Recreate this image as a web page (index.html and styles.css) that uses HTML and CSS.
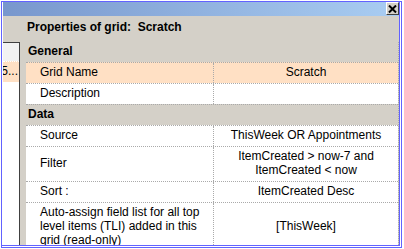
FILE: index.html
```html
<!DOCTYPE html>
<html>
<head>
<meta charset="utf-8">
<link rel="stylesheet" href="styles.css">
</head>
<body>
<div class="frame">
  <div class="inner">
    <div class="win">
      <div class="titlebar">
        <button class="close" type="button" aria-label="Close">
          <svg width="9" height="8" viewBox="0 0 9 8"><path d="M1 0.5 L8 7.5 M8 0.5 L1 7.5" stroke="#000" stroke-width="2" fill="none"/></svg>
        </button>
      </div>
      <div class="heading">Properties of grid:&nbsp; Scratch</div>
      <div class="main">
        <div class="side">
          <div class="side-head"></div>
          <div class="side-row"><span>5...</span></div>
        </div>
        <div class="props">
          <div class="section">General</div>
          <div class="row selected"><div class="label">Grid Name</div><div class="value">Scratch</div></div>
          <div class="row"><div class="label">Description</div><div class="value"></div></div>
          <div class="section">Data</div>
          <div class="row"><div class="label">Source</div><div class="value">ThisWeek OR Appointments</div></div>
          <div class="row"><div class="label">Filter</div><div class="value">ItemCreated &gt; now-7 and ItemCreated &lt; now</div></div>
          <div class="row"><div class="label">Sort :</div><div class="value">ItemCreated Desc</div></div>
          <div class="row"><div class="label">Auto-assign field list for all top level items (TLI) added in this grid (read-only)</div><div class="value">[ThisWeek]</div></div>
        </div>
      </div>
    </div>
  </div>
</div>
</body>
</html>
```
FILE: styles.css
```css
* { box-sizing: border-box; }
body {
  margin: 0;
  background: #fff;
  font-family: "Liberation Sans", Arial, sans-serif;
  font-size: 12px;
  color: #000;
}
.frame {
  margin: 1px 0 0 1px;
  width: 401px;
  height: 247px;
  border: 1px solid #6262ff;
  padding: 0 1px 1px 0;
  background: #fff;
}
.inner {
  height: 100%;
  border-right: 1px solid #6262ff;
  border-bottom: 1px solid #6262ff;
  padding-left: 1px;
}
.win {
  height: 100%;
  background: #d4d0c8;
  display: flex;
  flex-direction: column;
  overflow: hidden;
}
.titlebar {
  flex: none;
  height: 14px;
  background: linear-gradient(to right, #7897cd, #a9cdf2);
  display: flex;
  justify-content: flex-end;
}
.close {
  width: 13px;
  height: 13px;
  padding: 0;
  margin: 0;
  background: #d4d0c8;
  border: 1px solid;
  border-color: #fff #404040 #404040 #fff;
  display: flex;
  align-items: center;
  justify-content: center;
}
.close svg { display: block; }
.heading {
  flex: none;
  padding: 4px 0 8px 24px;
  line-height: 14px;
  font-weight: bold;
}
.main {
  flex: 1;
  min-height: 0;
  display: flex;
  gap: 6px;
}
.side {
  flex: none;
  width: 17px;
  background: #fff;
  border-top: 1px solid #404040;
  border-right: 1px solid #404040;
}
.side-head {
  height: 18px;
  background: #f2f2f2;
}
.side-row {
  height: 21px;
  border-top: 1px dotted #fff;
  background: #ffe0c4;
  display: flex;
  justify-content: flex-end;
  padding: 2px 1px 0 0;
  line-height: 14px;
  white-space: nowrap;
}
.props {
  flex: 1;
  border-right: 1px dotted #aaa;
}
.section {
  font-weight: bold;
  line-height: 14px;
  padding: 2px 0 4px 2px;
  border-top: 1px dotted #aaa;
}
.section:first-child { border-top: none; }
.row {
  display: grid;
  grid-template-columns: 187px 1fr;
  background: #fff;
  border-top: 1px dotted #aaa;
  line-height: 14px;
}
.row.selected { background: #ffe0c4; }
.label {
  display: flex;
  align-items: center;
  padding: 2px 4px 4px 14px;
}
.value {
  display: flex;
  align-items: center;
  justify-content: center;
  text-align: center;
  padding: 2px 4px 4px;
  border-left: 1px dotted #aaa;
}
```
